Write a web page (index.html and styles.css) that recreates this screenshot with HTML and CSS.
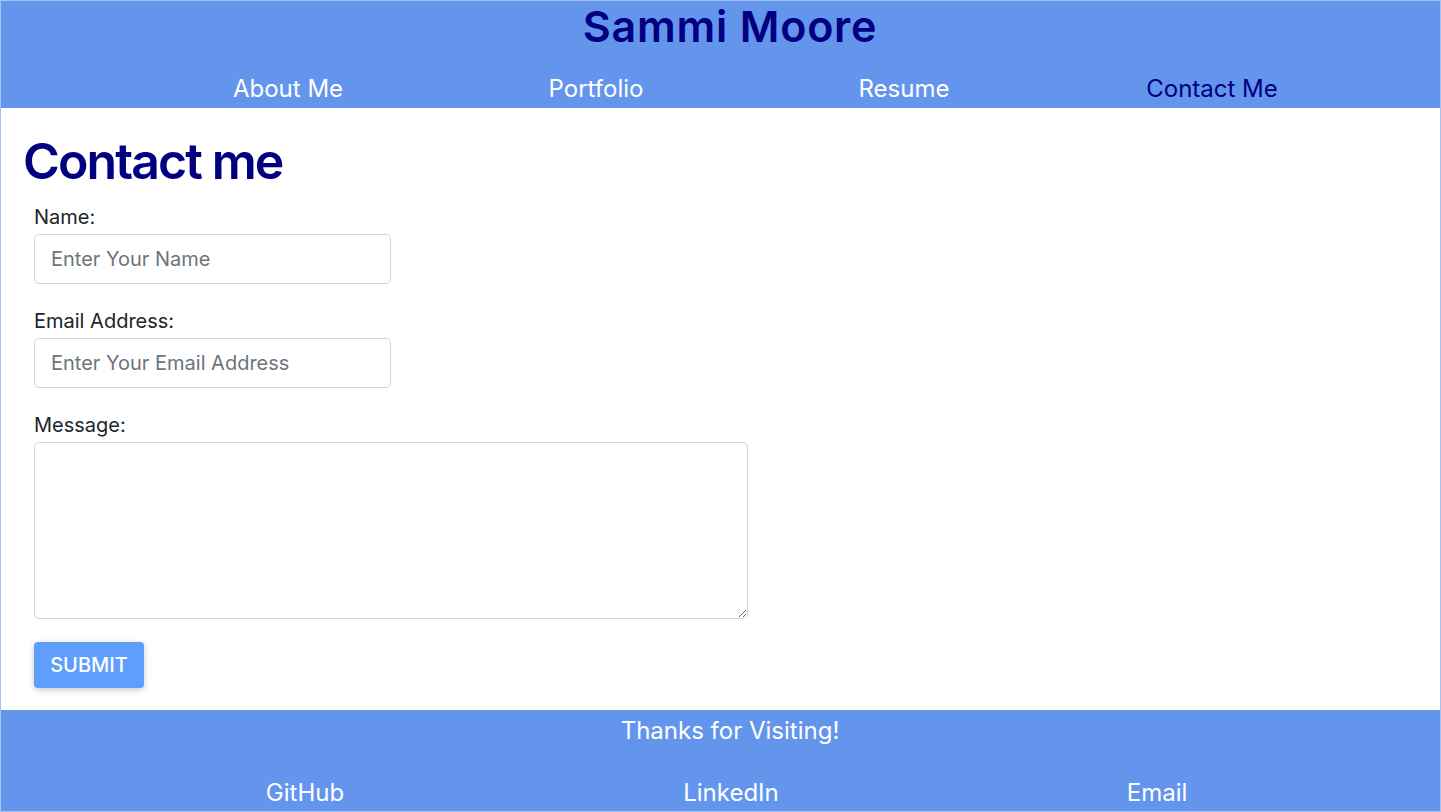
FILE: index.html
```html
<!DOCTYPE html>
<html lang="en">
<head>
<meta charset="utf-8">
<title>Sammi Moore</title>
<link rel="stylesheet" href="styles.css">
</head>
<body>
<div class="page">
  <header class="site-header">
    <h1 class="site-title">Sammi Moore</h1>
    <nav class="site-nav">
      <a class="nav-link" href="#">About Me</a>
      <a class="nav-link" href="#">Portfolio</a>
      <a class="nav-link" href="#">Resume</a>
      <a class="nav-link active" href="#">Contact Me</a>
    </nav>
  </header>
  <main class="content">
    <h2 class="page-title">Contact me</h2>
    <form class="contact-form">
      <div class="form-group">
        <label class="form-label" for="name">Name:</label>
        <input class="form-input" id="name" type="text" placeholder="Enter Your Name">
      </div>
      <div class="form-group">
        <label class="form-label" for="email">Email Address:</label>
        <input class="form-input" id="email" type="email" placeholder="Enter Your Email Address">
      </div>
      <div class="form-group">
        <label class="form-label" for="message">Message:</label>
        <textarea class="form-textarea" id="message"></textarea>
      </div>
      <button class="submit-btn" type="button">SUBMIT</button>
    </form>
  </main>
  <footer class="site-footer">
    <p class="thanks">Thanks for Visiting!</p>
    <div class="footer-links">
      <a class="footer-link" href="#">GitHub</a>
      <a class="footer-link" href="#">LinkedIn</a>
      <a class="footer-link" href="#">Email</a>
    </div>
  </footer>
</div>
</body>
</html>
```

FILE: styles.css
```css
* { box-sizing: border-box; }
html, body { margin: 0; padding: 0; }
body {
  font-family: Inter, "Noto Sans", "Liberation Sans", sans-serif;
  color: #212529;
  background: #fff;
}
.page {
  width: 1441px;
  height: 812px;
  border: 1px solid #a6c1f3;
  display: flex;
  flex-direction: column;
  overflow: hidden;
}
.site-header {
  background: #6495ed;
  height: 107px;
  flex: none;
}
.site-title {
  margin: 0;
  padding-left: 19px;
  text-align: center;
  font-size: 43px;
  font-weight: 600;
  line-height: 50px;
  letter-spacing: 0.8px;
  color: #000080;
}
.site-nav {
  display: grid;
  grid-template-columns: repeat(4, 308px);
  padding: 23px 0 0 133px;
}
.nav-link {
  text-align: center;
  font-size: 24px;
  line-height: 29px;
  color: #fff;
  text-decoration: none;
}
.nav-link.active { color: #000080; }

.content {
  flex: 1;
  padding: 23px 22px 0;
}
.page-title {
  margin: 0 0 12px;
  font-size: 50px;
  font-weight: 600;
  line-height: 60px;
  color: #000080;
  letter-spacing: -1.9px;
}
.contact-form {
  margin-left: 11px;
}
.form-group {
  display: flex;
  flex-direction: column;
  align-items: flex-start;
  margin-bottom: 23px;
}
.form-label {
  font-size: 20px;
  line-height: 28px;
  margin-bottom: 3px;
}
.form-input, .form-textarea {
  font-family: inherit;
  font-size: 20px;
  color: #212529;
  border: 1px solid #ced4da;
  border-radius: 5px;
  background: #fff;
  padding: 0 16px;
}
.form-input {
  width: 357px;
  height: 50px;
}
.form-input::placeholder { color: #6c757d; }
.form-textarea {
  width: 714px;
  height: 177px;
  padding: 8px 16px;
  resize: vertical;
}
.submit-btn {
  display: block;
  width: 110px;
  height: 46px;
  border: none;
  border-radius: 4px;
  background: #5e9efd;
  color: #fff;
  font-family: inherit;
  font-size: 20px;
  font-weight: 500;
  box-shadow: 0 2px 6px rgba(0, 0, 0, 0.22);
}

.site-footer {
  background: #6495ed;
  height: 101px;
  flex: none;
  color: #fff;
}
.thanks {
  margin: 0;
  padding: 6px 0 0 19px;
  text-align: center;
  font-size: 24px;
  line-height: 29px;
}
.footer-links {
  display: grid;
  grid-template-columns: repeat(3, 426px);
  padding: 33px 0 0 91px;
}
.footer-link {
  text-align: center;
  font-size: 24px;
  line-height: 29px;
  color: #fff;
  text-decoration: none;
}
```
